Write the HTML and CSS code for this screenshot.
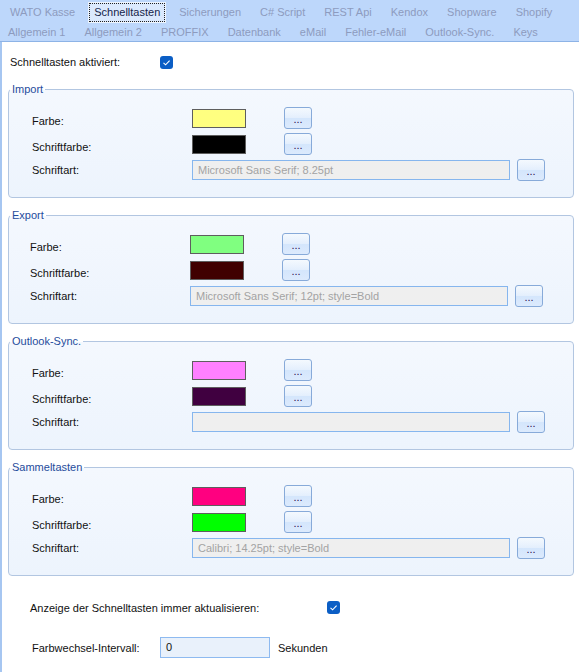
FILE: index.html
```html
<!DOCTYPE html>
<html>
<head>
<meta charset="UTF-8">
<title>Einstellungen - Schnelltasten</title>
<link rel="stylesheet" href="styles.css">
</head>
<body>
<div class="window">
  <!-- Reiterleiste, zwei Zeilen -->
  <div class="tabstrip">
    <div class="tabrow tabrow-top">
      <span class="tab">WATO Kasse</span>
      <span class="tab tab-active">Schnelltasten</span>
      <span class="tab">Sicherungen</span>
      <span class="tab">C# Script</span>
      <span class="tab">REST Api</span>
      <span class="tab">Kendox</span>
      <span class="tab">Shopware</span>
      <span class="tab">Shopify</span>
    </div>
    <div class="tabrow tabrow-bottom">
      <span class="tab">Allgemein 1</span>
      <span class="tab">Allgemein 2</span>
      <span class="tab">PROFFIX</span>
      <span class="tab">Datenbank</span>
      <span class="tab">eMail</span>
      <span class="tab">Fehler-eMail</span>
      <span class="tab">Outlook-Sync.</span>
      <span class="tab">Keys</span>
    </div>
  </div>

  <div class="panel">
    <div class="toprow">
      <span class="toprow-label">Schnelltasten aktiviert:</span>
      <span class="check"><svg width="9" height="9" viewBox="0 0 9 9"><polyline points="1.5,4.8 3.6,6.8 7.6,2.6" fill="none" stroke="#fff" stroke-width="1.1"/></svg></span>
    </div>

    <fieldset class="group">
      <legend>Import</legend>
      <div class="row color-row">
        <span class="row-label">Farbe:</span>
        <span class="swatch sw-yellow"></span>
        <button class="dots">...</button>
      </div>
      <div class="row color-row">
        <span class="row-label">Schriftfarbe:</span>
        <span class="swatch sw-black"></span>
        <button class="dots">...</button>
      </div>
      <div class="row">
        <span class="row-label">Schriftart:</span>
        <span class="fontbox">Microsoft Sans Serif; 8.25pt</span>
        <button class="dots dots-font">...</button>
      </div>
    </fieldset>

    <fieldset class="group group-shift">
      <legend>Export</legend>
      <div class="row color-row">
        <span class="row-label">Farbe:</span>
        <span class="swatch sw-green"></span>
        <button class="dots">...</button>
      </div>
      <div class="row color-row">
        <span class="row-label">Schriftfarbe:</span>
        <span class="swatch sw-darkred"></span>
        <button class="dots">...</button>
      </div>
      <div class="row">
        <span class="row-label">Schriftart:</span>
        <span class="fontbox">Microsoft Sans Serif; 12pt; style=Bold</span>
        <button class="dots dots-font">...</button>
      </div>
    </fieldset>

    <fieldset class="group">
      <legend>Outlook-Sync.</legend>
      <div class="row color-row">
        <span class="row-label">Farbe:</span>
        <span class="swatch sw-pink"></span>
        <button class="dots">...</button>
      </div>
      <div class="row color-row">
        <span class="row-label">Schriftfarbe:</span>
        <span class="swatch sw-purple"></span>
        <button class="dots">...</button>
      </div>
      <div class="row">
        <span class="row-label">Schriftart:</span>
        <span class="fontbox"></span>
        <button class="dots dots-font">...</button>
      </div>
    </fieldset>

    <fieldset class="group">
      <legend>Sammeltasten</legend>
      <div class="row color-row">
        <span class="row-label">Farbe:</span>
        <span class="swatch sw-magenta"></span>
        <button class="dots">...</button>
      </div>
      <div class="row color-row">
        <span class="row-label">Schriftfarbe:</span>
        <span class="swatch sw-lime"></span>
        <button class="dots">...</button>
      </div>
      <div class="row">
        <span class="row-label">Schriftart:</span>
        <span class="fontbox">Calibri; 14.25pt; style=Bold</span>
        <button class="dots dots-font">...</button>
      </div>
    </fieldset>

    <div class="refresh-row">
      <span class="refresh-label">Anzeige der Schnelltasten immer aktualisieren:</span>
      <span class="check"><svg width="9" height="9" viewBox="0 0 9 9"><polyline points="1.5,4.8 3.6,6.8 7.6,2.6" fill="none" stroke="#fff" stroke-width="1.1"/></svg></span>
    </div>

    <div class="interval-row">
      <span class="interval-label">Farbwechsel-Intervall:</span>
      <span class="interval-input">0</span>
      <span class="unit">Sekunden</span>
    </div>
  </div>
</div>
</body>
</html>
```

FILE: styles.css
```css
* {
  box-sizing: border-box;
}
body {
  margin: 0;
  background: #fff;
  font-family: "Liberation Sans", Arial, sans-serif;
  font-size: 11px;
  color: #111;
}
.window {
  display: flex;
  flex-direction: column;
  min-height: 100vh;
}

/* Reiterleiste */
.tabstrip {
  background: #bdd7fb;
  border-bottom: 1px solid #8db3e6;
  height: 42px;
}
.tabrow {
  display: flex;
  white-space: nowrap;
}
.tabrow-top {
  padding: 2px 0 0 0.5px;
  height: 23px;
}
.tabrow-bottom {
  margin-left: -1.5px;
  height: 18px;
}
.tab {
  padding: 0 9.5px;
  line-height: 21px;
  color: #8d9bbe;
}
.tabrow-bottom .tab {
  line-height: 18px;
}
.tab-active {
  padding: 0 6px;
  margin: 0 3.5px;
  background: #dbe9fd;
  color: #16244a;
  box-shadow: inset 0 0 0 1px #eef5fe;
  outline: 1px dotted #222;
  outline-offset: -2px;
}

/* Inhalt */
.panel {
  flex: 1;
  border-left: 2px solid #a6c6f1;
  padding: 0 5px 0 6px;
}
.toprow {
  display: flex;
  align-items: center;
  height: 14px;
  margin-top: 13px;
  padding-left: 2px;
}
.toprow-label {
  width: 150px;
}
.check {
  display: flex;
  align-items: center;
  justify-content: center;
  width: 13px;
  height: 13px;
  border-radius: 3px;
  background: #0b5ec5;
}

/* Gruppen */
.group {
  margin: 10px 0 0;
  padding: 11px 0 16px;
  min-width: 0;
  border: 1px solid #b2c6e1;
  border-radius: 4px;
  background: linear-gradient(#f4f8fe, #edf4fd);
}
.toprow + .group {
  margin-top: 13px;
}
.group legend {
  margin-left: 1px;
  padding: 0 2px;
  line-height: 14px;
  color: #1f4c9c;
}
.row {
  display: flex;
  align-items: center;
  height: 22px;
  padding-left: 23px;
}
.row + .row {
  margin-top: 4px;
}
.group-shift .row {
  padding-left: 21px;
}
.row-label {
  width: 160px;
}
.color-row .row-label {
  padding-top: 5px;
}
.swatch {
  width: 54px;
  height: 19px;
  border: 1px solid #5e5e5e;
}
.sw-yellow { background: #ffff80; }
.sw-black { background: #000; }
.sw-green { background: #80ff80; }
.sw-darkred { background: #400000; }
.sw-pink { background: #ff80ff; }
.sw-purple { background: #400040; }
.sw-magenta { background: #ff0080; }
.sw-lime { background: #00ff00; }

.dots {
  width: 28px;
  height: 22px;
  margin-left: 38px;
  padding: 0;
  border: 1px solid #87aad9;
  border-radius: 3px;
  background: linear-gradient(#f4f9fe, #e4effd 48%, #d4e6fc 52%, #dceafd);
  font-family: inherit;
  font-size: 11px;
  line-height: 22px;
  color: #2a104c;
}
.dots-font {
  margin-left: 7px;
}
.fontbox {
  width: 318px;
  height: 20px;
  padding: 0 5px;
  border: 1px solid #86b6ee;
  background: #efefef;
  color: #a3a3a3;
  line-height: 18px;
  white-space: nowrap;
}

/* unten */
.refresh-row {
  display: flex;
  align-items: center;
  height: 13px;
  margin-top: 25px;
  padding-left: 22px;
}
.refresh-label {
  width: 297px;
}
.interval-row {
  display: flex;
  align-items: center;
  height: 21px;
  margin-top: 23px;
  padding-left: 24px;
}
.interval-label {
  width: 128px;
}
.interval-input {
  width: 110px;
  height: 21px;
  padding: 0 5px;
  border: 1px solid #8ebaf0;
  background: #e9f1fb;
  line-height: 19px;
}
.unit {
  margin-left: 8px;
}
```
